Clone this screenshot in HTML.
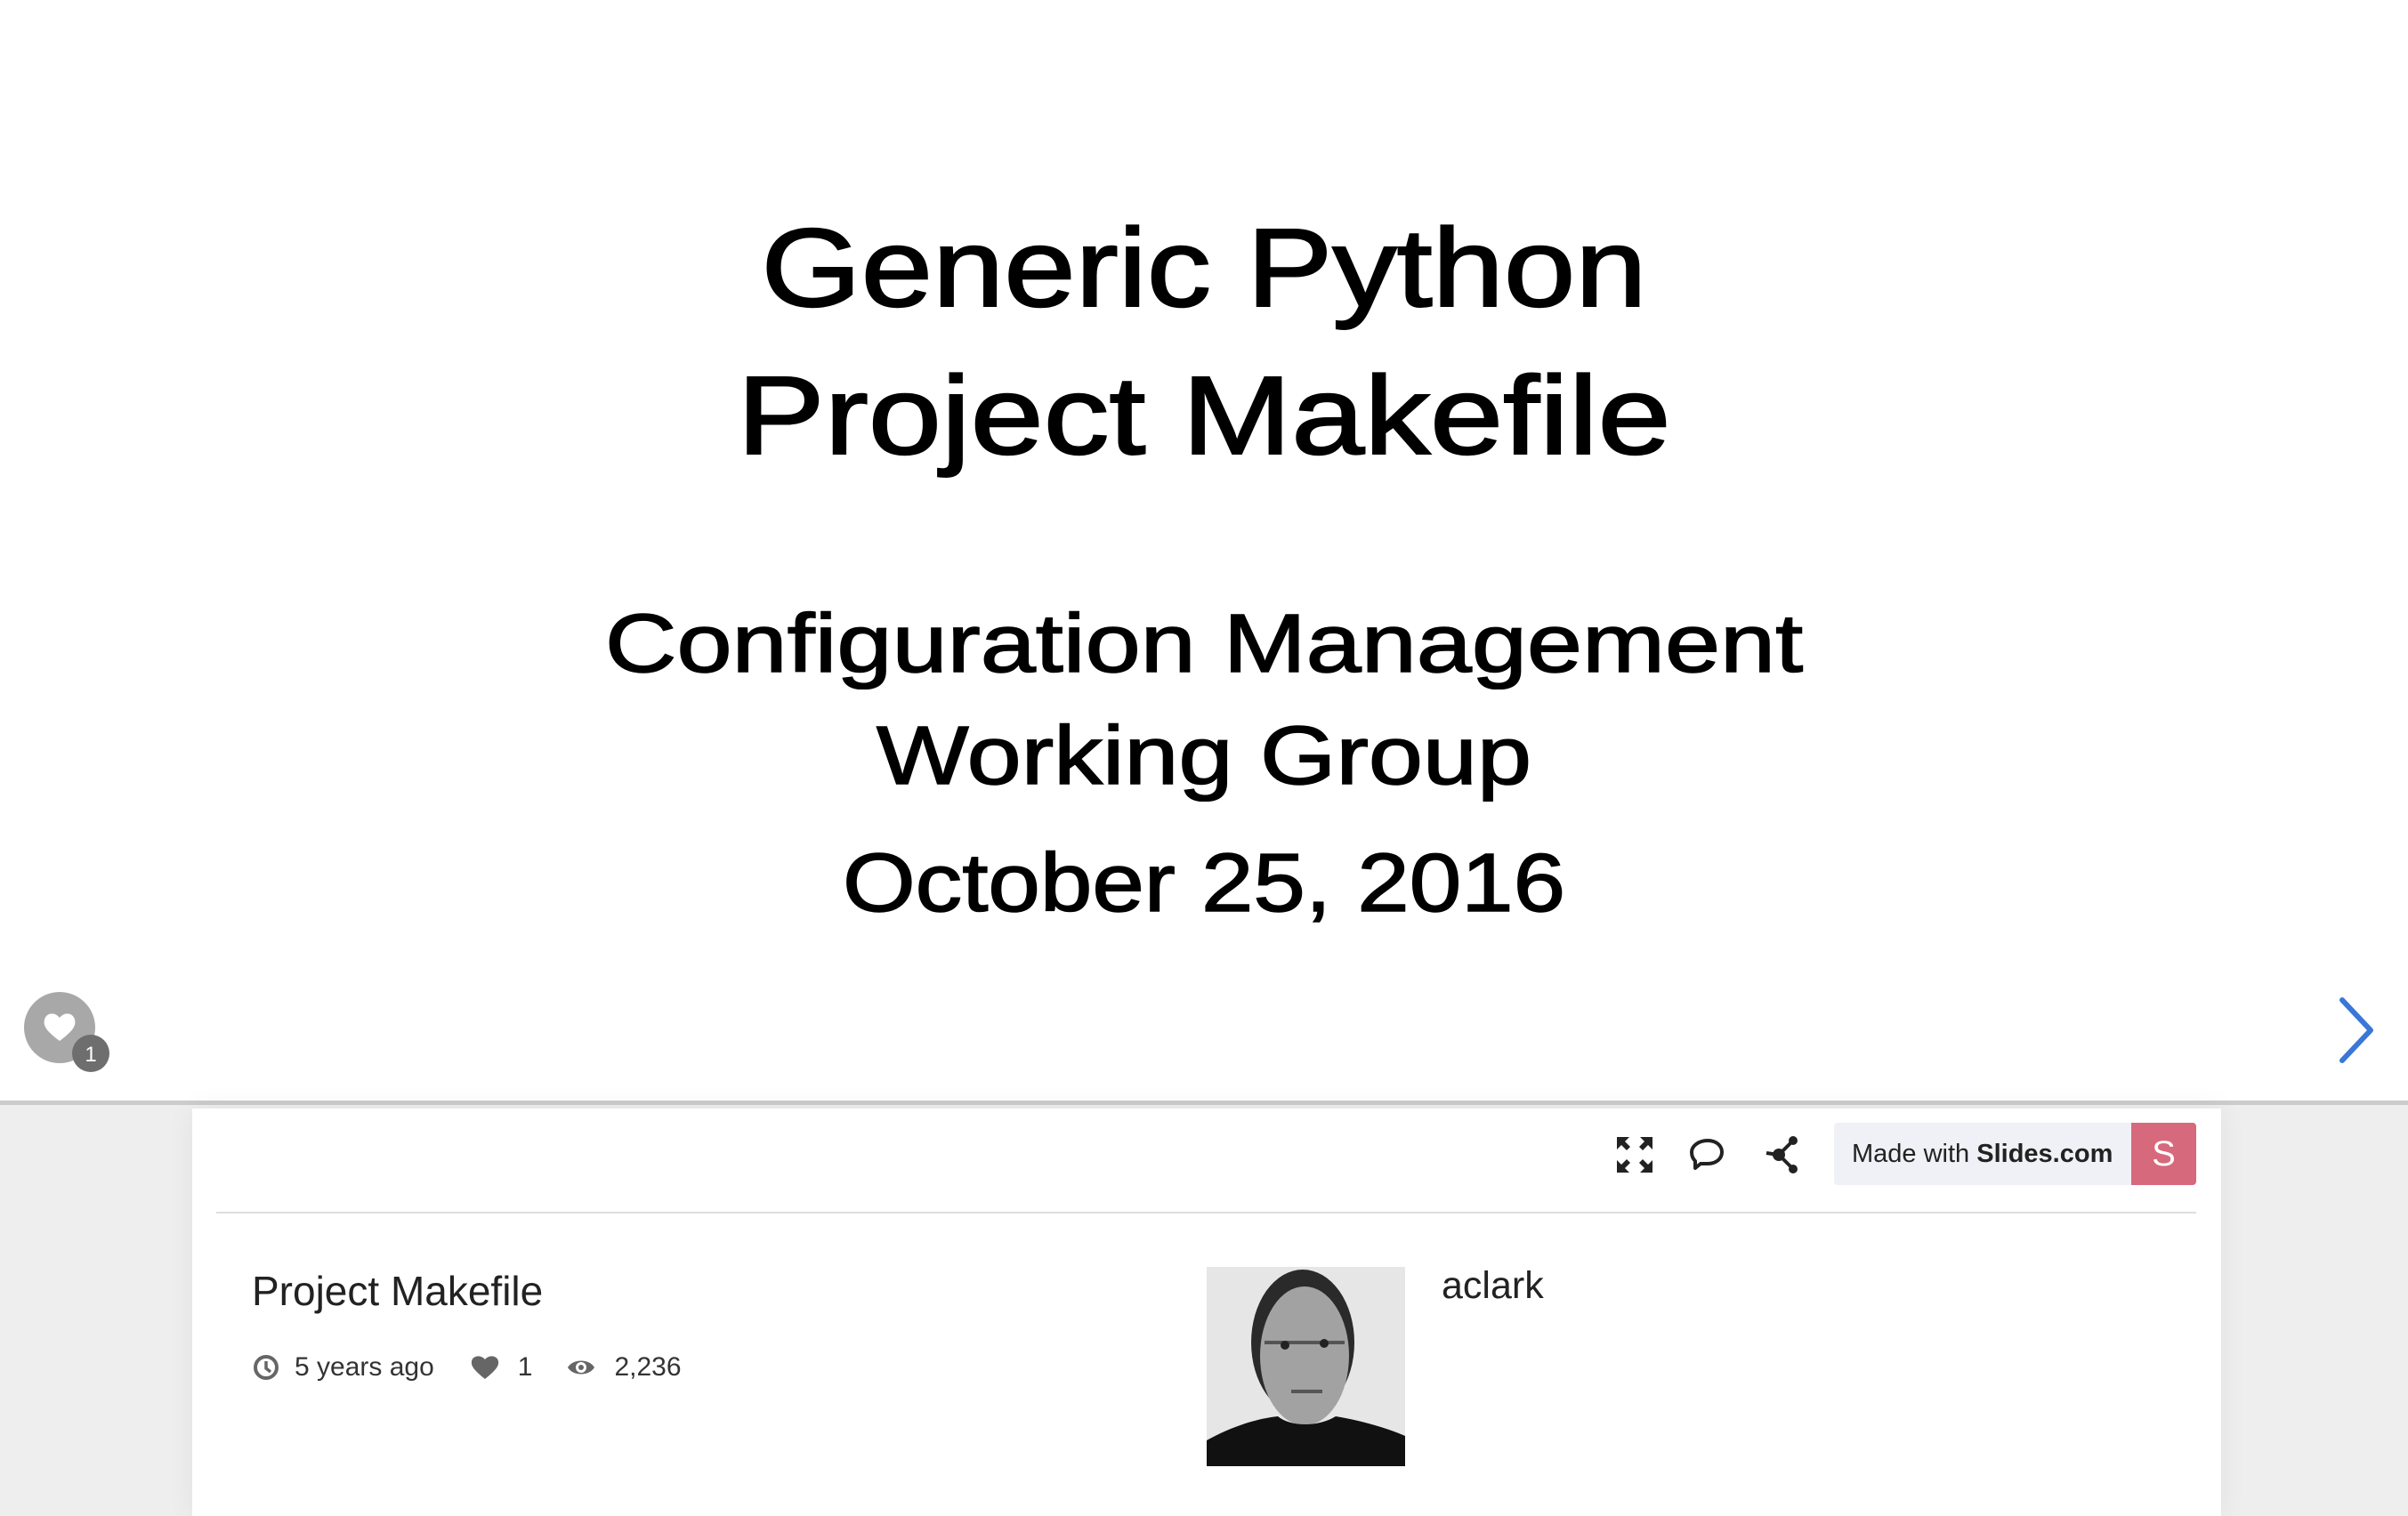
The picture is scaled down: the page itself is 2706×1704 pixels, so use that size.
<!DOCTYPE html>
<html><head><meta charset="utf-8"><style>
*{margin:0;padding:0;box-sizing:border-box}
html,body{width:2706px;height:1704px;overflow:hidden;background:#fff;font-family:"Liberation Sans",sans-serif}
.t{position:absolute;left:0;width:2706px;text-align:center;color:#000;white-space:nowrap;transform-origin:1353px 0}
.big{font-size:125px;line-height:1;-webkit-text-stroke:2px #000}
.mid{font-size:93px;line-height:1;-webkit-text-stroke:1.5px #000}
#bottom{position:absolute;left:0;top:1237px;width:2706px;height:467px;background:#eeeeee;border-top:5px solid #cccccc}
#panel{position:absolute;left:216px;top:1246px;width:2280px;height:458px;background:#fff;box-shadow:0 0 30px rgba(0,0,0,.06)}
</style></head><body>
<div class="t big" style="top:239px;transform:scaleX(1.155)">Generic Python</div>
<div class="t big" style="top:405px;transform:scaleX(1.18)">Project Makefile</div>
<div class="t mid" style="top:677px;transform:scaleX(1.2)">Configuration Management</div>
<div class="t mid" style="top:803px;transform:scaleX(1.18)">Working Group</div>
<div class="t mid" style="top:946px;transform:scaleX(1.13)">October 25, 2016</div>

<svg style="position:absolute;left:24px;top:1112px" width="110" height="100">
<circle cx="43" cy="43" r="40" fill="#a8a8a8"/>
<path d="M43 58 C30 48 24 42 26 34 C28 26 38 25 43 32 C48 25 58 26 60 34 C62 42 56 48 43 58Z" fill="#fff"/>
<circle cx="78" cy="72" r="21" fill="#6e6e6e"/>
<text x="78" y="81" font-size="24" fill="#fff" text-anchor="middle" font-family="Liberation Sans">1</text>
</svg>
<svg style="position:absolute;left:2620px;top:1118px" width="60" height="80">
<path d="M12 6 L44 40 L12 74" fill="none" stroke="#3a77d6" stroke-width="6" stroke-linecap="round" stroke-linejoin="round"/>
</svg>

<div id="bottom"></div>
<div id="panel">
 <svg style="position:absolute;left:1591px;top:22px" width="60" height="60">
  <g fill="#222"><path d="M10 10h14l-5 5 6 6-4 4-6-6-5 5z"/><path d="M50 10v14l-5-5-6 6-4-4 6-6-5-5z"/><path d="M10 50v-14l5 5 6-6 4 4-6 6 5 5z"/><path d="M50 50h-14l5-5-6-6 4-4 6 6 5-5z"/></g>
 </svg>
 <svg style="position:absolute;left:1673px;top:22px" width="60" height="60">
  <path d="M30 14c10 0 16 6 16 13s-6 13-16 13h-8l-6 5v-8c-3-3-4-6-4-10 0-7 8-13 18-13z" fill="none" stroke="#222" stroke-width="4" stroke-linejoin="round"/>
 </svg>
 <svg style="position:absolute;left:1757px;top:22px" width="60" height="60">
  <g stroke="#222" stroke-width="4"><line x1="26" y1="30" x2="42" y2="14"/><line x1="26" y1="30" x2="42" y2="46"/><line x1="26" y1="30" x2="12" y2="28"/></g>
  <g fill="#222"><circle cx="26" cy="30" r="7"/><circle cx="42" cy="14" r="5"/><circle cx="42" cy="46" r="5"/></g>
 </svg>
 <div style="position:absolute;left:1845px;top:16px;width:407px;height:70px;background:#f0f1f6;border-radius:4px;overflow:hidden">
  <div style="position:absolute;left:20px;top:0;line-height:70px;font-size:29px;color:#222">Made with <b>Slides.com</b></div>
  <div style="position:absolute;right:0;top:0;width:73px;height:70px;background:#d6697b;color:#fff;font-size:40px;line-height:70px;text-align:center">S</div>
 </div>
 <div style="position:absolute;left:27px;top:116px;width:2225px;height:2px;background:#dedede"></div>
 <div style="position:absolute;left:67px;top:178px;font-size:46px;color:#222">Project Makefile</div>
 <div style="position:absolute;left:67px;top:274px;font-size:30px;color:#333;display:flex;align-items:center;white-space:nowrap">
  <svg width="32" height="32" style="margin-right:16px"><circle cx="16" cy="16" r="12" fill="none" stroke="#666" stroke-width="4"/><path d="M16 9v8l5 4" fill="none" stroke="#666" stroke-width="3.5"/></svg>
  <span>5 years ago</span>
  <svg width="34" height="30" style="margin-left:40px;margin-right:20px"><path d="M17 28C6 19 1 14 2 8 3 2 12 0 17 6 22 0 31 2 32 8 33 14 28 19 17 28Z" fill="#666"/></svg>
  <span>1</span>
  <svg width="34" height="26" style="margin-left:38px;margin-right:20px"><path d="M2 13C8 3 26 3 32 13 26 23 8 23 2 13Z" fill="#666"/><circle cx="17" cy="13" r="6" fill="#fff"/><circle cx="17" cy="13" r="3" fill="#666"/></svg>
  <span>2,236</span>
 </div>
 <svg style="position:absolute;left:1140px;top:178px" width="223" height="224">
  <rect width="223" height="224" fill="#e6e6e6"/>
  <ellipse cx="108" cy="85" rx="58" ry="82" fill="#2a2a2a"/>
  <ellipse cx="110" cy="100" rx="50" ry="78" fill="#a2a2a2"/>
  <path d="M65 85h90" stroke="#555" stroke-width="4"/>
  <circle cx="88" cy="88" r="5" fill="#222"/><circle cx="132" cy="86" r="5" fill="#222"/>
  <path d="M95 140h35" stroke="#555" stroke-width="4"/>
  <path d="M0 224V195C30 178 60 170 80 168 95 180 125 180 145 168 170 172 200 180 223 190V224Z" fill="#111"/>
 </svg>
 <div style="position:absolute;left:1404px;top:175px;font-size:43px;color:#222">aclark</div>
</div>
</body></html>
